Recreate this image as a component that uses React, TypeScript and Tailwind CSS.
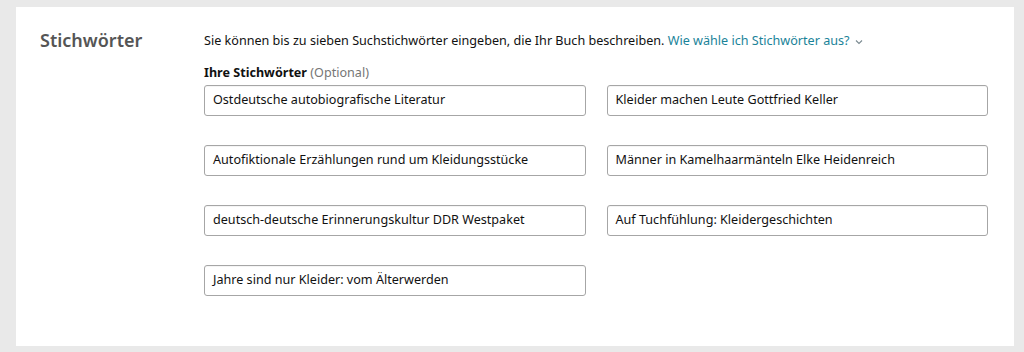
import React from 'react';

const KEYWORDS = [
  'Ostdeutsche autobiografische Literatur',
  'Kleider machen Leute Gottfried Keller',
  'Autofiktionale Erzählungen rund um Kleidungsstücke',
  'Männer in Kamelhaarmänteln Elke Heidenreich',
  'deutsch-deutsche Erinnerungskultur DDR Westpaket',
  'Auf Tuchfühlung: Kleidergeschichten',
  'Jahre sind nur Kleider: vom Älterwerden',
];

const App: React.FC = () => {
  return (
    <div className="h-[352px] w-[1024px] bg-[#e9e9e9] pl-4 pr-[10px] pt-[7px] font-['Noto_Sans',sans-serif]">
      <div className="flex h-[339px] bg-white pl-6 pt-[21px]">
        <h2 className="w-[164px] shrink-0 text-[18px] leading-[24px] font-semibold text-[#555]">Stichwörter</h2>
        <div className="w-[784px]">
          <p className="text-[12.6px] leading-[26px] text-[#111]">
            Sie können bis zu sieben Suchstichwörter eingeben, die Ihr Buch beschreiben.{' '}
            <a className="text-[#1a8399]">
              Wie wähle ich Stichwörter aus?
              <svg className="ml-[5px] inline-block align-middle" width="8" height="6" viewBox="0 0 8 6">
                <path d="M1 1.5l3 3 3-3" fill="none" stroke="#7a8a90" strokeWidth="1.1" />
              </svg>
            </a>
          </p>
          <div className="mt-[10px] text-[12.6px] leading-[18px]">
            <span className="font-bold text-[#111]">Ihre Stichwörter</span>{' '}
            <span className="text-[#767676]">(Optional)</span>
          </div>
          <div className="mt-[3px] grid grid-cols-2 gap-x-[21px] gap-y-[29px]">
            {KEYWORDS.map((k) => (
              <div
                key={k}
                className="flex h-[31px] items-center rounded-[3px] border border-[#a6a6a6] px-[8px] text-[12.6px] text-[#111] shadow-[inset_0_1px_0_rgba(0,0,0,0.04)]"
              >
                {k}
              </div>
            ))}
          </div>
        </div>
      </div>
    </div>
  );
};

export default App;
